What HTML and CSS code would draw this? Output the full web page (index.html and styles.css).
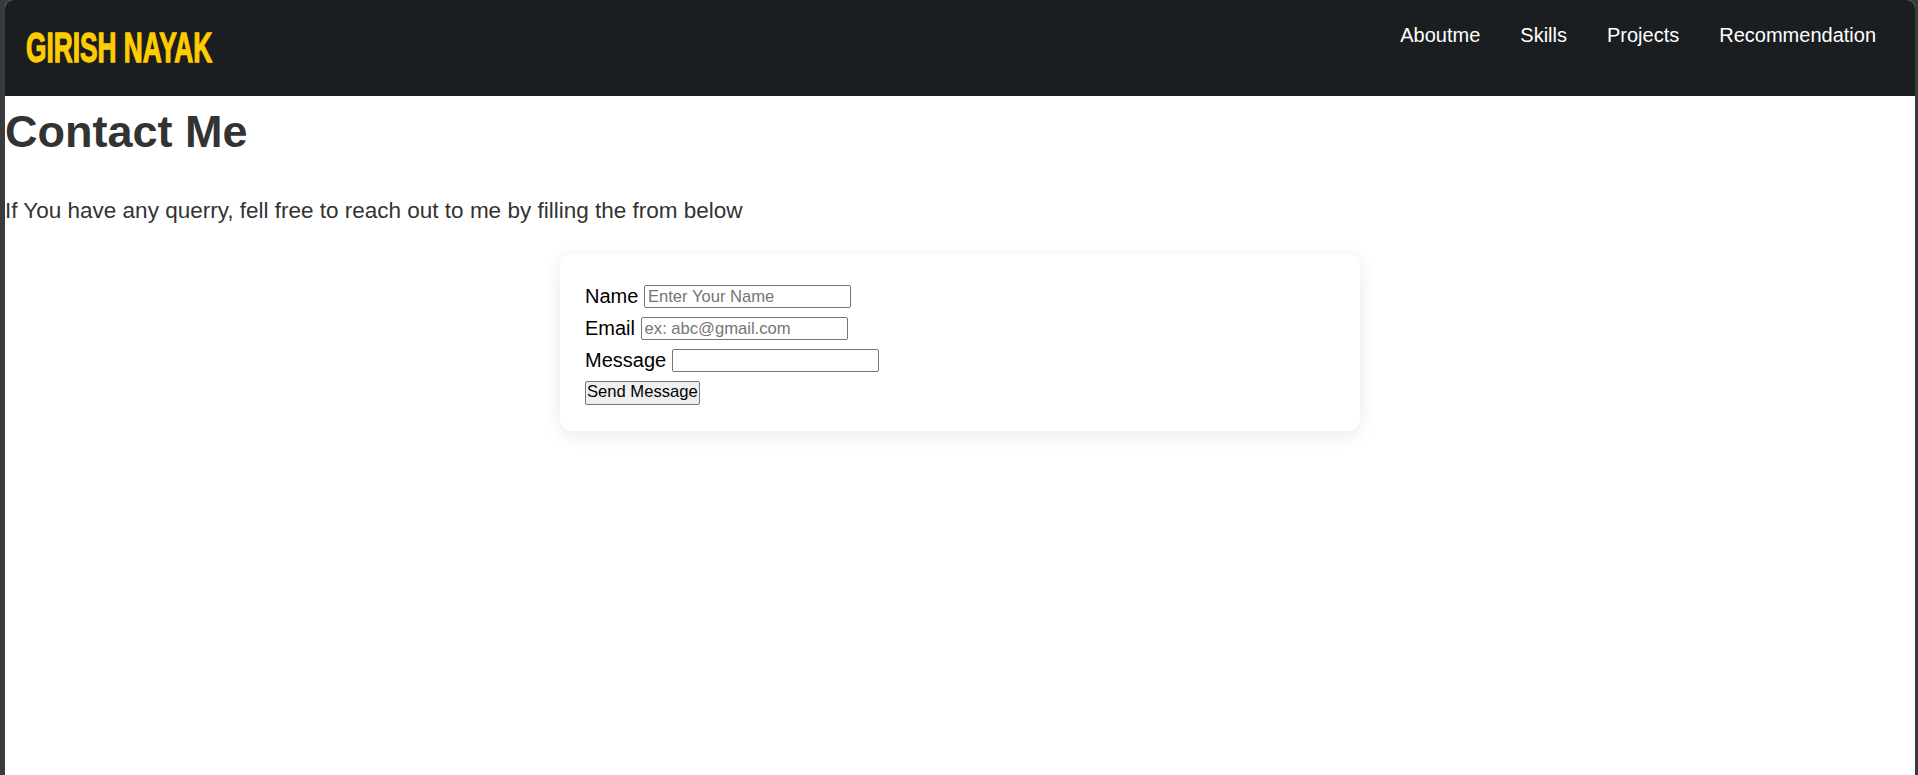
FILE: index.html
```html
<!DOCTYPE html>
<html lang="en">
<head>
<meta charset="utf-8">
<title>Contact Me</title>
<link rel="stylesheet" href="styles.css">
</head>
<body>
<div class="window">
  <header class="navbar">
    <div class="logo"><span class="logo-text">GIRISH NAYAK</span></div>
    <nav class="links">
      <a href="#about">Aboutme</a>
      <a href="#skills">Skills</a>
      <a href="#projects">Projects</a>
      <a href="#recommendation">Recommendation</a>
    </nav>
  </header>
  <main class="contact">
    <h1 class="title">Contact Me</h1>
    <p class="intro">If You have any querry, fell free to reach out to me by filling the from below</p>
    <form class="card">
      <div class="row"><label for="name">Name</label><input id="name" type="text" placeholder="Enter Your Name"></div>
      <div class="row"><label for="email">Email</label><input id="email" type="email" placeholder="ex: abc@gmail.com"></div>
      <div class="row"><label for="msg">Message</label><input id="msg" type="text"></div>
      <div class="row"><button type="button" class="send">Send Message</button></div>
    </form>
  </main>
</div>
</body>
</html>
```

FILE: styles.css
```css
html, body {
  margin: 0;
  padding: 0;
}
body {
  background: #3b3b3b;
  font-family: "Liberation Sans", Arial, sans-serif;
  height: 775px;
  overflow: hidden;
}
.window {
  margin: 0 3px 0 5px;
  background: #ffffff;
  border-radius: 8px 8px 0 0;
  overflow: hidden;
  height: 775px;
}
.navbar {
  height: 96px;
  background: #1b1e20;
  display: flex;
  justify-content: space-between;
  align-items: flex-start;
  padding: 0 39px 0 21px;
}
.logo {
  align-self: center;
  height: 48px;
  display: flex;
  align-items: center;
}
.logo-text {
  display: inline-block;
  font-family: "Liberation Sans", Arial, sans-serif;
  font-weight: 700;
  font-size: 42px;
  color: #ffcc00;
  -webkit-text-stroke: 1.3px #ffcc00;
  transform: scaleX(0.625);
  transform-origin: left center;
  white-space: nowrap;
  line-height: 1;
}
.links {
  display: flex;
  gap: 40px;
  padding-top: 24px;
}
.links a {
  color: #ffffff;
  text-decoration: none;
  font-size: 20px;
}
.contact {
  color: #333333;
}
.title {
  margin: 10px 0 0;
  font-size: 45px;
  font-weight: 700;
  color: #333333;
}
.intro {
  margin: 40px 0 30px;
  font-size: 22.5px;
  color: #333333;
}
.card {
  width: 800px;
  box-sizing: border-box;
  margin: 0 auto;
  padding: 31px 25px 27px;
  background: #ffffff;
  border-radius: 12px;
  box-shadow: 0 4px 18px rgba(0, 0, 0, 0.09);
  display: flex;
  flex-direction: column;
  gap: 9px;
  color: #000000;
}
.row {
  display: flex;
  align-items: center;
  gap: 5.6px;
  height: 23px;
}
.row label {
  font-size: 20px;
}
.row input {
  width: 207px;
  height: 23px;
  box-sizing: border-box;
  border: 1px solid #767676;
  border-radius: 2px;
  padding: 1px 3px;
  font-family: "Liberation Sans", Arial, sans-serif;
  font-size: 16.6px;
  color: #000;
  background: #fff;
}
.row input::placeholder {
  color: #757575;
}
.send {
  height: 24px;
  box-sizing: border-box;
  padding: 1px 1px;
  border: 1px solid #767676;
  border-radius: 2px;
  background: #efefef;
  font-family: "Liberation Sans", Arial, sans-serif;
  font-size: 16.6px;
  color: #000;
  line-height: 1;
}
```
